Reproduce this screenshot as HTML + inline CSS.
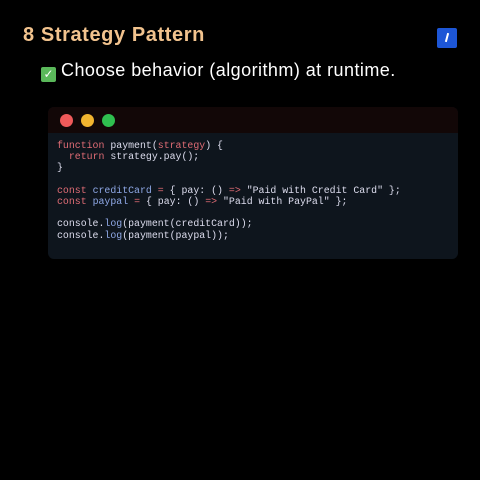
<!DOCTYPE html>
<html><head><style>
body{margin:0;width:480px;height:480px;background:#000;overflow:hidden;position:relative;font-family:"Liberation Sans",sans-serif}
.t{position:absolute;left:23px;top:24px;font-size:20px;font-weight:bold;color:#f2c38e;letter-spacing:0.6px}
.logo{position:absolute;left:437px;top:28px;width:20px;height:20px;background:#1d56d6;border-radius:2px}
.logo:after{content:"";position:absolute;left:9px;top:5px;width:2px;height:9px;background:#fff;transform:rotate(15deg)}
.s{position:absolute;left:41px;top:60px;font-size:18px;color:#fff;letter-spacing:0.45px}
.chk{display:inline-block;width:15px;height:15px;background:#5ab85a;border-radius:2px;vertical-align:-2px;color:#fff;font-size:12px;text-align:center;line-height:15px;margin-right:5px;letter-spacing:0}
.card{position:absolute;left:48px;top:107px;width:410px;height:152px;background:#0e151d;border-radius:6px;overflow:hidden}
.hd{height:26px;background:#120707}
.d{position:absolute;top:7px;width:13px;height:13px;border-radius:50%}
pre{margin:0;position:absolute;left:9px;top:33px;font-family:"Liberation Mono",monospace;font-size:9.9px;line-height:11.2px;color:#dde}
.k{color:#e06c75}.v{color:#8fa8e6}.o{color:#e06c75}
</style></head><body>
<div class="t">8 Strategy Pattern</div>
<div class="logo"></div>
<div class="s"><span class="chk">✓</span>Choose behavior (algorithm) at runtime.</div>
<div class="card"><div class="hd"></div>
<div class="d" style="left:12px;background:#ef5a5a"></div>
<div class="d" style="left:33px;background:#f1b42f"></div>
<div class="d" style="left:54px;background:#2fbf4f"></div>
<pre><span class="k">function</span> payment(<span class="k">strategy</span>) {
  <span class="k">return</span> strategy.pay();
}

<span class="k">const</span> <span class="v">creditCard</span> <span class="o">=</span> { pay: () <span class="o">=&gt;</span> "Paid with Credit Card" };
<span class="k">const</span> <span class="v">paypal</span> <span class="o">=</span> { pay: () <span class="o">=&gt;</span> "Paid with PayPal" };

console.<span class="v">log</span>(payment(creditCard));
console.<span class="v">log</span>(payment(paypal));</pre>
</div>
</body></html>
